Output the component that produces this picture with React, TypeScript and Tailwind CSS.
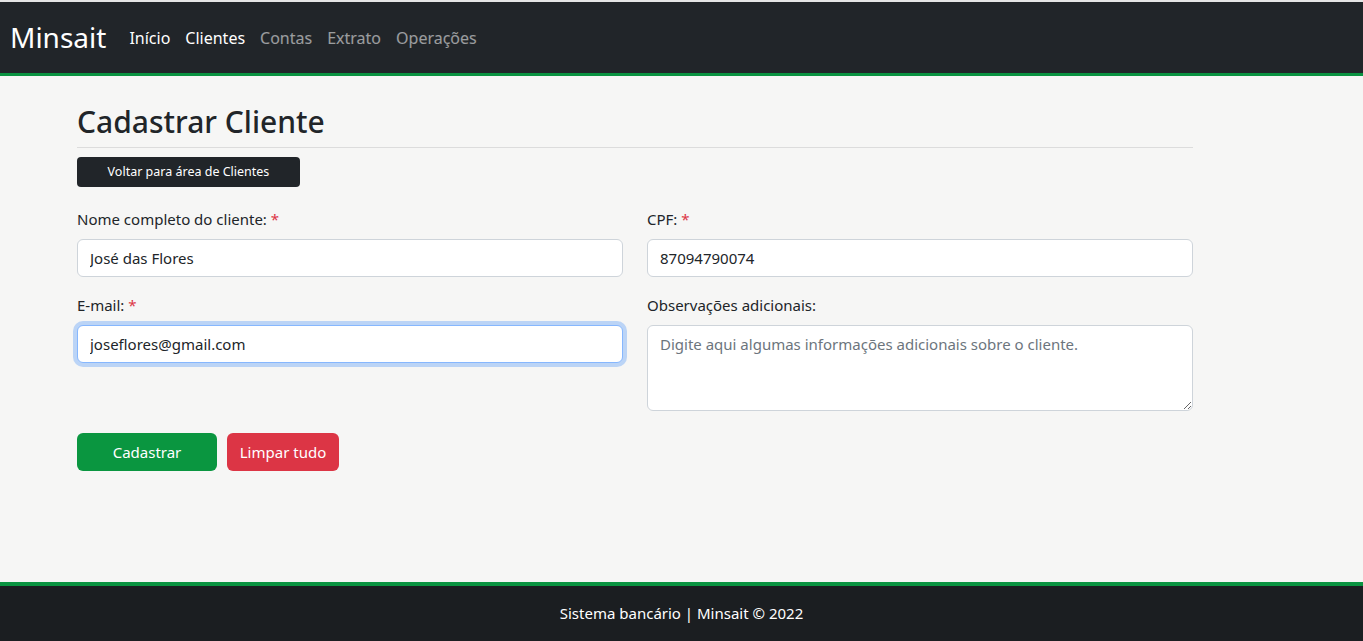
import React, { useState } from 'react';

const font = { fontFamily: '"Noto Sans", "Open Sans", sans-serif' };

function Label({ text, required }: { text: string; required?: boolean }) {
  return (
    <label className="block text-[15px] leading-[24px] text-[#212529] mb-[8px]">
      {text} {required && <span className="text-[#dc3545]">*</span>}
    </label>
  );
}

export default function App() {
  const [nome, setNome] = useState('José das Flores');
  const [cpf, setCpf] = useState('87094790074');
  const [email, setEmail] = useState('joseflores@gmail.com');
  const [obs, setObs] = useState('');

  const inputCls =
    'block w-full h-[38px] px-[12px] text-[15px] text-[#212529] bg-white border border-[#ced4da] rounded-[6px] outline-none';

  return (
    <div style={font} className="min-h-[641px] flex flex-col bg-[#f6f6f5] border-t-2 border-[#e5e5e5]">
      {/* Navbar */}
      <nav className="h-[74px] bg-[#212529] border-b-[3px] border-[#0a9341] flex items-center px-[10px]">
        <span className="text-[28px] text-white mr-[23px] leading-none -mt-[2px]">Minsait</span>
        <div className="flex gap-[15px] text-[16px] mt-[1px]">
          <span className="text-white">Início</span>
          <span className="text-white">Clientes</span>
          <span className="text-white/55">Contas</span>
          <span className="text-white/55">Extrato</span>
          <span className="text-white/55">Operações</span>
        </div>
      </nav>

      {/* Content */}
      <main className="flex-1 pl-[77px] pr-[170px] pt-[26px]">
        <h2 className="text-[30px] font-medium text-[#212529] leading-[40px]">Cadastrar Cliente</h2>
        <hr className="mt-[5px] border-t border-[#dcdcdc]" />
        <button className="mt-[9px] w-[223px] h-[30px] bg-[#212529] text-white text-[12.5px] rounded-[4px]">
          Voltar para área de Clientes
        </button>

        <div className="grid grid-cols-2 gap-x-[24px] mt-[20px]">
          <div className="flex flex-col gap-[16px]">
            <div>
              <Label text="Nome completo do cliente:" required />
              <input className={inputCls} value={nome} onChange={(e) => setNome(e.target.value)} />
            </div>
            <div>
              <Label text="E-mail:" required />
              <input
                className={inputCls + ' !border-[#86b7fe] shadow-[0_0_0_4px_rgba(13,110,253,0.25)]'}
                value={email}
                onChange={(e) => setEmail(e.target.value)}
              />
            </div>
          </div>
          <div className="flex flex-col gap-[16px]">
            <div>
              <Label text="CPF:" required />
              <input className={inputCls} value={cpf} onChange={(e) => setCpf(e.target.value)} />
            </div>
            <div>
              <Label text="Observações adicionais:" />
              <textarea
                className="block w-full h-[86px] px-[12px] py-[7px] text-[15px] text-[#212529] bg-white border border-[#ced4da] rounded-[6px] outline-none placeholder:text-[#6c757d]"
                placeholder="Digite aqui algumas informações adicionais sobre o cliente."
                value={obs}
                onChange={(e) => setObs(e.target.value)}
              />
            </div>
          </div>
        </div>

        <div className="flex gap-[10px] mt-[22px]">
          <button className="w-[140px] h-[38px] bg-[#0a9640] text-white text-[15px] rounded-[6px]">Cadastrar</button>
          <button className="w-[112px] h-[38px] bg-[#dc3545] text-white text-[15px] rounded-[6px]">Limpar tudo</button>
        </div>
      </main>

      {/* Footer */}
      <footer className="h-[59px] bg-[#1b1e21] border-t-[4px] border-[#0a9341] flex items-center justify-center text-white text-[15px]">
        Sistema bancário | Minsait © 2022
      </footer>
    </div>
  );
}
